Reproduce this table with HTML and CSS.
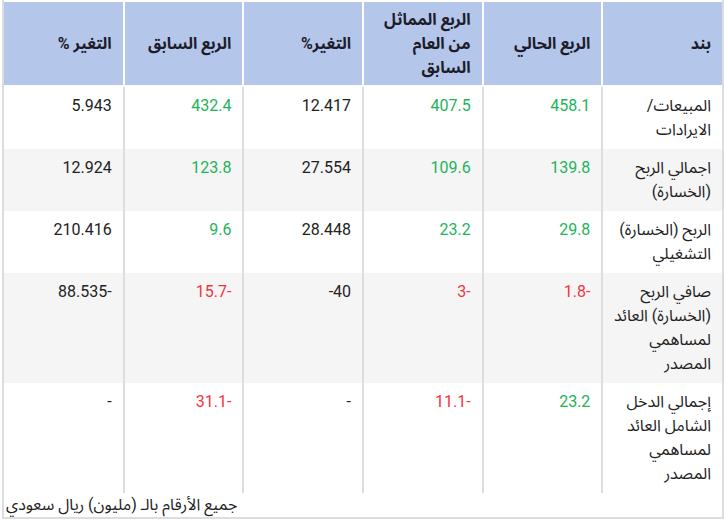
FILE: index.html
```html
<!DOCTYPE html>
<html lang="ar" dir="rtl">
<head>
<meta charset="utf-8">
<title>النتائج المالية</title>
<link rel="stylesheet" href="styles.css">
</head>
<body>
<div class="wrap">
  <table class="fin">
    <thead>
      <tr>
        <th>بند</th>
        <th>الربع الحالي</th>
        <th class="multi">الربع المماثل<br>من العام<br>السابق</th>
        <th>التغير%</th>
        <th>الربع السابق</th>
        <th>التغير %</th>
      </tr>
    </thead>
    <tbody>
      <tr>
        <td class="item">المبيعات/<br>الايرادات</td>
        <td class="pos">458.1</td>
        <td class="pos">407.5</td>
        <td>12.417</td>
        <td class="pos">432.4</td>
        <td>5.943</td>
      </tr>
      <tr class="alt">
        <td class="item">اجمالي الربح<br>(الخسارة)</td>
        <td class="pos">139.8</td>
        <td class="pos">109.6</td>
        <td>27.554</td>
        <td class="pos">123.8</td>
        <td>12.924</td>
      </tr>
      <tr>
        <td class="item">الربح (الخسارة)<br>التشغيلي</td>
        <td class="pos">29.8</td>
        <td class="pos">23.2</td>
        <td>28.448</td>
        <td class="pos">9.6</td>
        <td>210.416</td>
      </tr>
      <tr class="alt">
        <td class="item">صافي الربح<br>(الخسارة) العائد<br>لمساهمي<br>المصدر</td>
        <td class="neg">-1.8</td>
        <td class="neg">-3</td>
        <td>40-</td>
        <td class="neg">-15.7</td>
        <td>-88.535</td>
      </tr>
      <tr>
        <td class="item">إجمالي الدخل<br>الشامل العائد<br>لمساهمي<br>المصدر</td>
        <td class="pos">23.2</td>
        <td class="neg">-11.1</td>
        <td>-</td>
        <td class="neg">-31.1</td>
        <td>-</td>
      </tr>
    </tbody>
  </table>
  <div class="note">جميع الأرقام بالـ (مليون) ريال سعودي</div>
</div>
</body>
</html>
```
FILE: styles.css
```css
html, body {
  margin: 0;
  padding: 0;
  background: #ffffff;
}

body {
  font-family: Roboto, "Noto Sans Arabic", "Noto Sans", "DejaVu Sans", sans-serif;
  font-size: 16px;
  color: #222222;
}

.wrap {
  width: 718px;
  padding-top: 2px;
  border-left: 2px solid #dddddd;
  border-right: 2px solid #dddddd;
  border-bottom: 2px solid #dddddd;
}

.fin {
  width: 718px;
  border-collapse: collapse;
  table-layout: fixed;
}

.fin th {
  background: #b4c6ea;
  color: #1c1c2a;
  font-weight: bold;
  text-align: right;
  vertical-align: middle;
  line-height: 24px;
  padding: 6px 11px 5px 11px;
  border-left: 2px solid #ffffff;
  border-bottom: 2px solid #ffffff;
  white-space: nowrap;
}

.fin td {
  text-align: right;
  vertical-align: top;
  line-height: 24px;
  padding: 7px 11px;
  border-left: 2px solid #dddddd;
}

.fin td.item {
  white-space: nowrap;
}

.fin th:last-child,
.fin td:last-child {
  border-left: none;
}

.fin tr.alt td {
  background: #f5f5f5;
}

.pos {
  color: #1db45a;
}

.neg {
  color: #f5333f;
}

.note {
  direction: rtl;
  text-align: left;
  line-height: 24px;
  padding-left: 2px;
  color: #222222;
}
```
